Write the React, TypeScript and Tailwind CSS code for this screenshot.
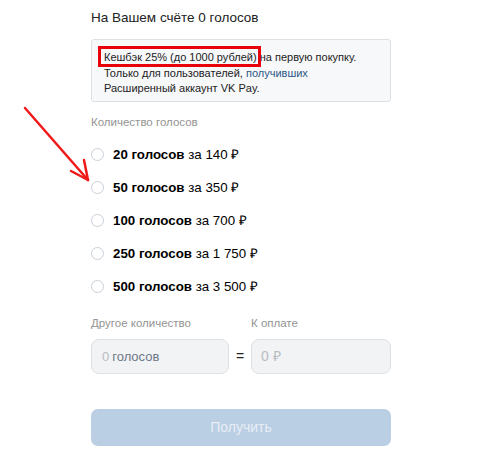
const options = [
  { votes: "20 голосов", price: "за 140 ₽" },
  { votes: "50 голосов", price: "за 350 ₽" },
  { votes: "100 голосов", price: "за 700 ₽" },
  { votes: "250 голосов", price: "за 1 750 ₽" },
  { votes: "500 голосов", price: "за 3 500 ₽" },
];

function Arrow() {
  return (
    <svg
      className="absolute left-0 top-0 pointer-events-none"
      width="100"
      height="200"
      viewBox="0 0 100 200"
    >
      <g stroke="#f01a1a" strokeWidth="2.5" strokeLinecap="round" fill="none">
        <line x1="25" y1="108" x2="88" y2="180" />
        <line x1="88" y1="180" x2="71" y2="171" />
        <line x1="88" y1="180" x2="84" y2="160" />
      </g>
    </svg>
  );
}

export default function App() {
  return (
    <div
      className="relative w-[500px] h-[455px] bg-white text-black overflow-hidden"
      style={{ fontFamily: '"Liberation Sans", Arial, sans-serif' }}
    >
      <div className="ml-[91px] w-[300px] pt-[9px] flex flex-col">
        <h1 className="text-[13.5px] leading-[18px] text-[#222]">На Вашем счёте 0 голосов</h1>

        <div className="mt-[12px] h-[63px] border border-[#dce1e6] rounded-[3px] bg-[#f7f8fa] pl-[12px] pt-[10px] text-[11px] leading-[15.5px] text-[#222]">
          <p>
            <span className="relative">
              Кешбэк 25% (до 1000 рублей)
              <span className="absolute -left-[6px] -right-[4px] -top-[5px] -bottom-[4px] border-[3px] border-[#e8000b]" />
            </span>{" "}
            на первую покупку.
          </p>
          <p>
            Только для пользователей, <span className="text-[#2a5885]">получивших</span>
          </p>
          <p>Расширенный аккаунт VK Pay.</p>
        </div>

        <div className="mt-[13px] text-[11.5px] leading-[15px] text-[#939393]">Количество голосов</div>

        <div className="mt-[8px] flex flex-col">
          {options.map((o) => (
            <label key={o.votes} className="h-[33px] flex items-center gap-[9px]">
              <span className="w-[13px] h-[13px] rounded-full border border-[#c9d0d8] bg-white shrink-0" />
              <span className="text-[13.3px] text-[#000]">
                <b className="font-bold">{o.votes}</b> {o.price}
              </span>
            </label>
          ))}
        </div>

        <div className="mt-[13px] flex items-end">
          <div className="w-[138px] flex flex-col">
            <span className="text-[11.5px] leading-[15px] text-[#939393]">Другое количество</span>
            <div className="mt-[8px] h-[35px] rounded-[8px] border border-[#dce1e6] bg-[#f2f3f5] flex items-center px-[10px] text-[13px]">
              <span className="text-[#b8bcc2]">0</span>
              <span className="ml-[3px] text-[#6d7885]">голосов</span>
            </div>
          </div>
          <div className="w-[22px] h-[35px] flex items-center justify-center text-[14px] text-[#222]">=</div>
          <div className="w-[140px] flex flex-col">
            <span className="text-[11.5px] leading-[15px] text-[#939393]">К оплате</span>
            <div className="mt-[8px] h-[35px] rounded-[8px] border border-[#dce1e6] bg-[#f2f3f5] flex items-center px-[9px] text-[14px] text-[#b8bcc2]">
              0 ₽
            </div>
          </div>
        </div>

        <button className="mt-[35px] h-[37px] w-[300px] rounded-[7px] bg-[#bacee4] text-[14px] text-[#e8eef6]">
          Получить
        </button>
      </div>
      <Arrow />
    </div>
  );
}
